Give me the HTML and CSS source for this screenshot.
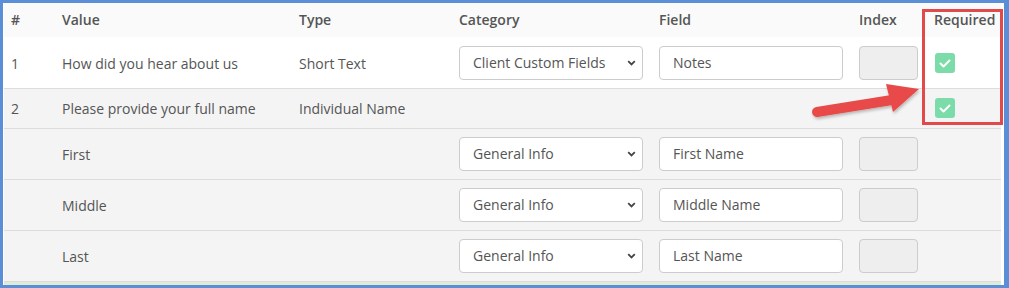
FILE: index.html
```html
<!DOCTYPE html>
<html>
<head>
<meta charset="utf-8">
<link rel="stylesheet" href="styles.css">
</head>
<body>
<div class="frame">
  <table class="grid">
    <colgroup>
      <col class="c-num"><col class="c-value"><col class="c-type"><col class="c-cat"><col class="c-field"><col class="c-index"><col class="c-req">
    </colgroup>
    <thead>
      <tr class="head">
        <th>#</th><th>Value</th><th>Type</th><th>Category</th><th>Field</th><th>Index</th><th>Required</th>
      </tr>
    </thead>
    <tbody>
      <tr class="row row-white row-first">
        <td>1</td>
        <td>How did you hear about us</td>
        <td>Short Text</td>
        <td><div class="select"><span>Client Custom Fields</span><svg class="chev" width="9" height="6" viewBox="0 0 9 6"><polyline points="1.2,1.2 4.5,4.4 7.8,1.2" fill="none" stroke="#444" stroke-width="1.8"/></svg></div></td>
        <td><div class="input">Notes</div></td>
        <td><div class="index"></div></td>
        <td><span class="check"><svg width="20" height="20" viewBox="0 0 20 20"><polyline points="5.5,10.5 8.5,13.5 14.5,7.5" fill="none" stroke="#fff" stroke-width="2" stroke-linecap="round" stroke-linejoin="round"/></svg></span></td>
      </tr>
      <tr class="row row-group">
        <td>2</td>
        <td>Please provide your full name</td>
        <td>Individual Name</td>
        <td></td><td></td><td></td>
        <td><span class="check"><svg width="20" height="20" viewBox="0 0 20 20"><polyline points="5.5,10.5 8.5,13.5 14.5,7.5" fill="none" stroke="#fff" stroke-width="2" stroke-linecap="round" stroke-linejoin="round"/></svg></span></td>
      </tr>
      <tr class="row row-sub">
        <td></td>
        <td>First</td>
        <td></td>
        <td><div class="select"><span>General Info</span><svg class="chev" width="9" height="6" viewBox="0 0 9 6"><polyline points="1.2,1.2 4.5,4.4 7.8,1.2" fill="none" stroke="#444" stroke-width="1.8"/></svg></div></td>
        <td><div class="input">First Name</div></td>
        <td><div class="index"></div></td>
        <td></td>
      </tr>
      <tr class="row row-sub">
        <td></td>
        <td>Middle</td>
        <td></td>
        <td><div class="select"><span>General Info</span><svg class="chev" width="9" height="6" viewBox="0 0 9 6"><polyline points="1.2,1.2 4.5,4.4 7.8,1.2" fill="none" stroke="#444" stroke-width="1.8"/></svg></div></td>
        <td><div class="input">Middle Name</div></td>
        <td><div class="index"></div></td>
        <td></td>
      </tr>
      <tr class="row row-sub">
        <td></td>
        <td>Last</td>
        <td></td>
        <td><div class="select"><span>General Info</span><svg class="chev" width="9" height="6" viewBox="0 0 9 6"><polyline points="1.2,1.2 4.5,4.4 7.8,1.2" fill="none" stroke="#444" stroke-width="1.8"/></svg></div></td>
        <td><div class="input">Last Name</div></td>
        <td><div class="index"></div></td>
        <td></td>
      </tr>
    </tbody>
  </table>
  <div class="strip"></div>
</div>
<div class="highlight"></div>
<svg class="arrow" width="1009" height="288" viewBox="0 0 1009 288">
  <defs>
    <filter id="sh" x="-10%" y="-30%" width="130%" height="180%">
      <feDropShadow dx="1" dy="2" stdDeviation="1.5" flood-color="#000" flood-opacity="0.25"/>
    </filter>
  </defs>
  <g filter="url(#sh)" fill="#e84a48">
    <line x1="817" y1="112" x2="892" y2="100" stroke="#e84a48" stroke-width="10" stroke-linecap="round"/>
    <polygon points="886,84 919,89 893,112"/>
  </g>
</svg>
</body>
</html>
```

FILE: styles.css
```css
html, body {
  margin: 0;
  padding: 0;
}
body {
  background: #5a8fd7;
  padding: 3px 5px 3px 3px;
  width: 1009px;
  height: 288px;
  box-sizing: border-box;
  position: relative;
  overflow: hidden;
  font-family: "Open Sans", "Liberation Sans", sans-serif;
  font-size: 14px;
  color: #555;
}
.frame {
  background: #fff;
  padding: 0 3px 0 1px;
  height: 282px;
  overflow: hidden;
}
.grid {
  width: 997px;
  table-layout: fixed;
  border-collapse: collapse;
  border-spacing: 0;
}
.c-num { width: 51px; }
.c-value { width: 237px; }
.c-type { width: 160px; }
.c-cat { width: 200px; }
.c-field { width: 200px; }
.c-index { width: 75px; }
.c-req { width: 74px; }
.grid th, .grid td {
  padding: 0 8px 0 7px;
  text-align: left;
  vertical-align: middle;
  white-space: nowrap;
}
.head th {
  height: 33px;
  padding-bottom: 1px;
  background: #fafafa;
  font-weight: 600;
  color: #555;
}
.row td {
  border-bottom: 1px solid #dcdcdc;
  background: #f4f4f4;
}
.row-white td {
  background: #fff;
  height: 50px;
  padding-top: 1px;
}
.row-group td {
  height: 39px;
}
.row-group .check {
  margin-top: -1px;
}
.row-sub td {
  height: 50px;
}
.select {
  width: 184px;
  height: 34px;
  box-sizing: border-box;
  border: 1px solid #ccc;
  border-radius: 4px;
  background: #fff;
  display: flex;
  align-items: center;
  justify-content: space-between;
  padding: 0 6px 1px 13px;
  color: #555;
}
.chev { display: block; margin-top: 1px; }
.input {
  width: 184px;
  height: 34px;
  box-sizing: border-box;
  border: 1px solid #ccc;
  border-radius: 4px;
  background: #fff;
  display: flex;
  align-items: center;
  padding: 0 13px 2px;
  color: #555;
}
.index {
  width: 59px;
  height: 34px;
  box-sizing: border-box;
  border: 1px solid #ccc;
  border-radius: 4px;
  background: #eee;
}
.check {
  display: block;
  width: 20px;
  height: 20px;
  margin-left: 1px;
  border-radius: 3px;
  background: #7bdcaa;
}
.check svg { display: block; }
.strip {
  height: 4px;
  background: #deebd6;
}
.highlight {
  position: absolute;
  left: 922px;
  top: 9px;
  width: 81px;
  height: 116px;
  box-sizing: border-box;
  border: 3px solid #e2494a;
}
.arrow {
  position: absolute;
  left: 0;
  top: 0;
  pointer-events: none;
}
```
